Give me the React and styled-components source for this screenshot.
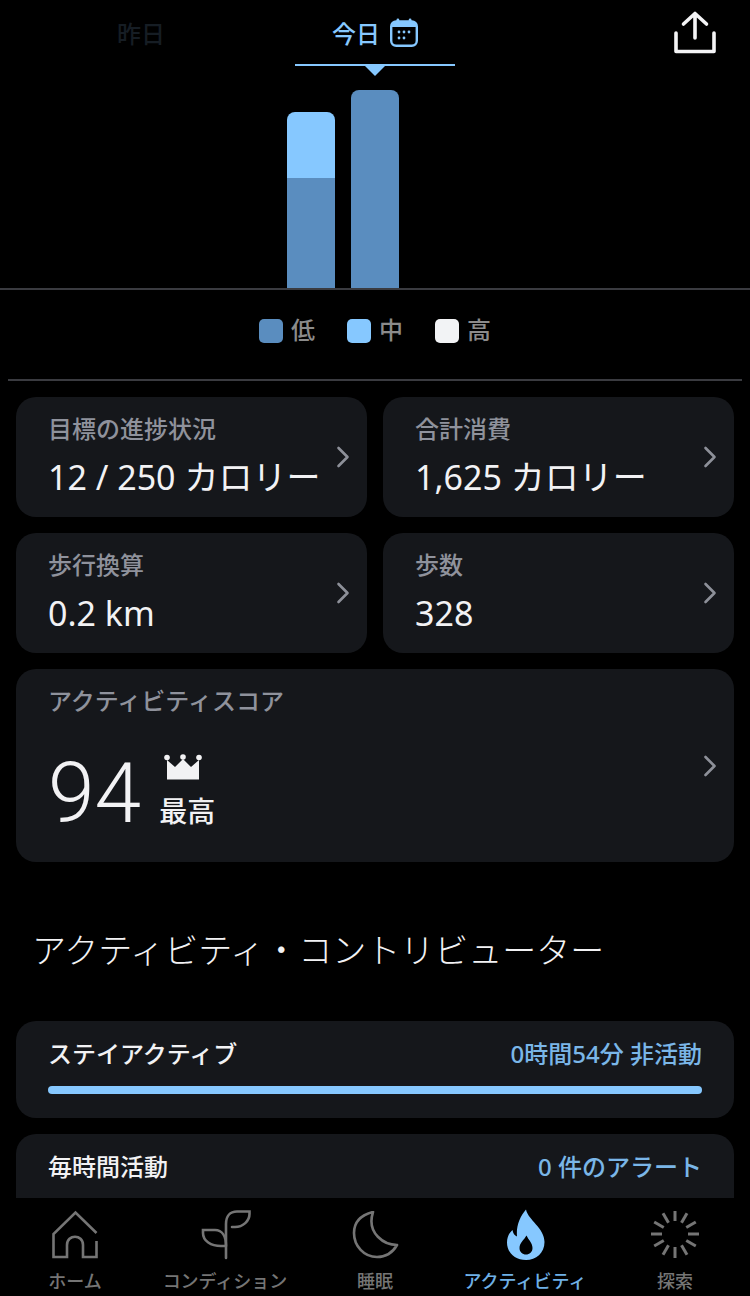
import React from 'react';
import styled, { createGlobalStyle } from 'styled-components';

const GlobalStyle = createGlobalStyle`
  html, body {
    margin: 0;
    padding: 0;
    background: #000;
  }
  body {
    font-family: "Noto Sans", "Noto Sans CJK JP", sans-serif;
  }
`;

const BLUE_LIGHT = '#86c8ff';
const BLUE_DARK = '#5a8dbf';

const summaryCards = [
  { title: '目標の進捗状況', value: '12 / 250 カロリー' },
  { title: '合計消費', value: '1,625 カロリー' },
  { title: '歩行換算', value: '0.2 km' },
  { title: '歩数', value: '328' },
];

const HomeIcon = () => (
  <svg width="46" height="51" viewBox="0 0 46 51" fill="none" stroke="#757575" strokeWidth="2.6">
    <path d="M44.5 23 L23.5 2.500 L1.500 24 V47 H15 V35 C15 24 31 24 31 35 V47 H44.500 V31" />
  </svg>
);

const SproutIcon = () => (
  <svg width="52" height="52" viewBox="0 -2 52 52" fill="none" stroke="#757575" strokeWidth="2.6" strokeLinecap="round">
    <path d="M27 47 V13 C27 5 31 0.500 38 0.500 H50.500 V3 C50.500 10 44 16 36 16 H33" />
    <path d="M27 35 H22 C12 35 4 30 4 22 V19 H16 C23 19 27 25 27 35" />
  </svg>
);

const MoonIcon = () => (
  <svg width="48" height="50" viewBox="-1 1 48 50" fill="none" stroke="#757575" strokeWidth="2.6" strokeLinejoin="round">
    <path d="M21 2 C9 5 2 12 2 23 C2 36 12 47 25 47 C34 47 41 42 45 35 C33 35 14 24 21 2 Z" />
  </svg>
);

const FlameIcon = () => (
  <svg width="40" height="52" viewBox="-1 0 40 52" fill={BLUE_LIGHT}>
    <path fillRule="evenodd" d="M20 0.5 C22 11 38.5 19 38.5 33 C38.5 44 30 51 20 51 C9.5 51 1 44 1 33.5 C1 28 3 24 6.5 21 C7 24.5 8.5 26.5 11 27.5 C10 17 14 7.5 20 0.5 Z M20.5 26.5 C18 31 13.5 34 13.5 39 C13.5 43 16.5 45.5 20 45.5 C23.5 45.5 26.5 43 26.5 39 C26.5 34 22.5 31 20.5 26.5 Z" />
  </svg>
);

const ExploreIcon = () => (
  <svg width="50" height="50" viewBox="-25 -23 50 50" stroke="#757575" strokeWidth="3">
    {Array.from({ length: 12 }).map((_, i) => (
      <line key={i} x1="0" y1="-24" x2="0" y2="-13" transform={`rotate(${i * 30})`} />
    ))}
  </svg>
);

const CalendarIcon = () => (
  <svg width="28" height="29" viewBox="0 0 28 29" fill="none">
    <rect x="1.200" y="3.500" width="25.600" height="24.300" rx="5" stroke={BLUE_LIGHT} strokeWidth="2.400" />
    <path d="M2 9 V7 C2 5.500 3.500 4 5 4 H23 C24.500 4 26 5.500 26 7 V9 Z" fill={BLUE_LIGHT} />
    <rect x="6.500" y="0.500" width="2.800" height="5" rx="1.400" fill={BLUE_LIGHT} />
    <rect x="18.700" y="0.500" width="2.800" height="5" rx="1.400" fill={BLUE_LIGHT} />
    {[[9, 14], [14, 14], [19, 14], [9, 20], [14, 20]].map(([x, y]) => (
      <circle key={`${x}-${y}`} cx={x} cy={y} r="1.400" fill={BLUE_LIGHT} />
    ))}
  </svg>
);

const ShareIcon = () => (
  <svg width="42" height="44" viewBox="0 0 42 44" fill="none" stroke="#f4f4f6" strokeWidth="3.600" strokeLinecap="round" strokeLinejoin="round">
    <path d="M21 27 V2.500 M9.500 13 L21 2.500 L32.500 13" />
    <path d="M2 22 V40.500 H40 V22" />
  </svg>
);

const Chevron = () => (
  <ChevronSvg width="14" height="22" viewBox="0 0 14 22" fill="none" stroke="#8d9099" strokeWidth="2.600" strokeLinecap="round" strokeLinejoin="round">
    <path d="M2.500 2 L11.500 11 L2.500 20" />
  </ChevronSvg>
);

const CrownIcon = () => (
  <svg width="38" height="27" viewBox="0 0 38 27" fill="#f2f2f4">
    <circle cx="3" cy="3.500" r="2.800" />
    <circle cx="19" cy="3" r="2.800" />
    <circle cx="35" cy="3.500" r="2.800" />
    <path d="M3 6 L11 13 L19 5 L27 13 L35 6 V25.500 H3 Z" />
  </svg>
);

const Screen = styled.div`
  width: 750px;
  height: 1296px;
  display: flex;
  flex-direction: column;
  overflow: hidden;
  background: #000;
`;

const Content = styled.main`
  flex: 1;
  min-height: 0;
  overflow: hidden;
`;

const TabBar = styled.div`
  display: grid;
  grid-template-columns: 61px 160px 74px 160px 1fr;
  height: 66px;
`;

const Tab = styled.div`
  grid-column: ${(p) => p.$column};
  display: flex;
  align-items: center;
  justify-content: center;
  gap: 10px;
  height: 66px;
  box-sizing: border-box;
  font-size: 24px;
  font-weight: 500;
  color: ${(p) => (p.$active ? BLUE_LIGHT : '#161d24')};
  border-bottom: 2px solid ${(p) => (p.$active ? BLUE_LIGHT : 'transparent')};
  position: relative;
`;

const Pointer = styled.span`
  position: absolute;
  left: 68px;
  top: 64px;
  border-left: 12px solid transparent;
  border-right: 12px solid transparent;
  border-top: 12px solid ${BLUE_LIGHT};
`;

const ShareSlot = styled.div`
  grid-column: 5;
  display: flex;
  justify-content: flex-end;
  padding: 11px 34px 0 0;
`;

const Chart = styled.div`
  height: 222px;
  display: flex;
  justify-content: center;
  align-items: flex-end;
  gap: 16px;
  padding-right: 64px;
  border-bottom: 2px solid #3a3b40;
`;

const Bar = styled.div`
  width: 48px;
  height: ${(p) => p.$height}px;
  border-radius: 8px 8px 0 0;
  overflow: hidden;
  display: flex;
  flex-direction: column;
`;

const BarPart = styled.div`
  height: ${(p) => (p.$height ? `${p.$height}px` : 'auto')};
  flex: ${(p) => (p.$height ? 'none' : 1)};
  background: ${(p) => p.$color};
`;

const Legend = styled.div`
  display: flex;
  height: 91px;
  margin: 0 8px;
  padding: 29px 0 0 251px;
  box-sizing: border-box;
  border-bottom: 2px solid #3a3b40;
`;

const LegendItem = styled.div`
  width: 88px;
  height: 24px;
  display: flex;
  align-items: center;
  gap: 8px;
`;

const LegendLabel = styled.span`
  padding-bottom: 3px;
  font-size: 24px;
  line-height: 24px;
  font-weight: 500;
  color: #8b8b8b;
`;

const Swatch = styled.span`
  width: 24px;
  height: 24px;
  border-radius: 5px;
  background: ${(p) => p.$color};
`;

const CardGrid = styled.div`
  display: grid;
  grid-template-columns: 1fr 1fr;
  gap: 16px;
  padding: 16px 16px 0;
`;

const Card = styled.div`
  position: relative;
  grid-column: ${(p) => (p.$wide ? '1 / -1' : 'auto')};
  height: ${(p) => (p.$wide ? 193 : 120)}px;
  box-sizing: border-box;
  padding: 17px 32px 0;
  background: #15171b;
  border-radius: 20px;
`;

const ChevronSvg = styled.svg`
  position: absolute;
  right: 17px;
  top: 49px;
  ${Card}[data-wide] & {
    top: 86px;
  }
`;

const CardTitle = styled.div`
  font-size: 24px;
  line-height: 30px;
  color: #8f929c;
  font-weight: 500;
  white-space: nowrap;
`;

const CardValue = styled.div`
  margin-top: 11px;
  font-size: 34px;
  line-height: 44px;
  color: #f2f2f4;
  white-space: nowrap;
`;

const ScoreRow = styled.div`
  display: flex;
  align-items: flex-end;
  gap: 18px;
  margin-top: 30px;
`;

const ScoreNumber = styled.div`
  font-family: Roboto, sans-serif;
  font-size: 84px;
  line-height: 96px;
  font-weight: 300;
  color: #f2f2f4;
`;

const ScoreBadge = styled.div`
  display: flex;
  flex-direction: column;
  padding-bottom: 14px;
  font-size: 28px;
  line-height: 34px;
  font-weight: 500;
  color: #f2f2f4;
`;

const CrownSlot = styled.div`
  height: 27px;
  margin: 0 0 14px 5px;
`;

const SectionTitle = styled.h2`
  margin: 0;
  height: 159px;
  padding: 64px 0 0 32px;
  box-sizing: border-box;
  font-size: 34px;
  line-height: 48px;
  font-weight: 300;
  color: #f2f2f4;
  white-space: nowrap;
`;

const ContributorList = styled.div`
  display: flex;
  flex-direction: column;
  gap: 16px;
  padding: 0 16px;
`;

const Contributor = styled.div`
  background: #15171b;
  border-radius: 20px;
  padding: 16px 32px 0;
  height: ${(p) => p.$height}px;
  box-sizing: border-box;
`;

const ContributorHead = styled.div`
  display: flex;
  justify-content: space-between;
  font-size: 24px;
  line-height: 34px;
  font-weight: 500;
  color: #f2f2f4;
`;

const ContributorValue = styled.span`
  color: ${BLUE_LIGHT};
  opacity: 0.9;
`;

const Progress = styled.div`
  margin-top: 15px;
  height: 8px;
  border-radius: 4px;
  background: ${BLUE_LIGHT};
`;

const BottomNav = styled.nav`
  height: 98px;
  display: grid;
  grid-template-columns: repeat(5, 150px);
  background: #000;
`;

const NavItem = styled.div`
  display: flex;
  flex-direction: column;
  align-items: center;
`;

const NavIconSlot = styled.div`
  height: 63px;
  display: flex;
  align-items: flex-end;
`;

const NavLabel = styled.span`
  margin-top: 8px;
  font-size: 18px;
  line-height: 24px;
  font-weight: 500;
  white-space: nowrap;
  color: ${(p) => (p.$active ? '#6fb0e6' : '#757575')};
`;

const navItems = [
  { label: 'ホーム', icon: <HomeIcon /> },
  { label: 'コンディション', icon: <SproutIcon /> },
  { label: '睡眠', icon: <MoonIcon /> },
  { label: 'アクティビティ', icon: <FlameIcon />, active: true },
  { label: '探索', icon: <ExploreIcon /> },
];

const App = () => {
  return (
    <Screen>
      <GlobalStyle />
      <Content>
        <TabBar>
          <Tab $column={2}>昨日</Tab>
          <Tab $column={4} $active>
            今日
            <CalendarIcon />
            <Pointer />
          </Tab>
          <ShareSlot><ShareIcon /></ShareSlot>
        </TabBar>

        <Chart>
          <Bar $height={176}>
            <BarPart $color={BLUE_LIGHT} $height={66} />
            <BarPart $color={BLUE_DARK} />
          </Bar>
          <Bar $height={198}>
            <BarPart $color={BLUE_DARK} />
          </Bar>
        </Chart>

        <Legend>
          <LegendItem><Swatch $color={BLUE_DARK} /><LegendLabel>低</LegendLabel></LegendItem>
          <LegendItem><Swatch $color={BLUE_LIGHT} /><LegendLabel>中</LegendLabel></LegendItem>
          <LegendItem><Swatch $color="#f2f3f5" /><LegendLabel>高</LegendLabel></LegendItem>
        </Legend>

        <CardGrid>
          {summaryCards.map((card) => (
            <Card key={card.title}>
              <CardTitle>{card.title}</CardTitle>
              <CardValue>{card.value}</CardValue>
              <Chevron />
            </Card>
          ))}
          <Card $wide data-wide>
            <CardTitle>アクティビティスコア</CardTitle>
            <ScoreRow>
              <ScoreNumber>94</ScoreNumber>
              <ScoreBadge>
                <CrownSlot><CrownIcon /></CrownSlot>
                最高
              </ScoreBadge>
            </ScoreRow>
            <Chevron />
          </Card>
        </CardGrid>

        <SectionTitle>アクティビティ・コントリビューター</SectionTitle>

        <ContributorList>
          <Contributor $height={97}>
            <ContributorHead>
              <span>ステイアクティブ</span>
              <ContributorValue>0時間54分 非活動</ContributorValue>
            </ContributorHead>
            <Progress />
          </Contributor>
          <Contributor $height={97}>
            <ContributorHead>
              <span>毎時間活動</span>
              <ContributorValue>0 件のアラート</ContributorValue>
            </ContributorHead>
          </Contributor>
        </ContributorList>
      </Content>

      <BottomNav>
        {navItems.map((item) => (
          <NavItem key={item.label}>
            <NavIconSlot>{item.icon}</NavIconSlot>
            <NavLabel $active={item.active}>{item.label}</NavLabel>
          </NavItem>
        ))}
      </BottomNav>
    </Screen>
  );
};

export default App;
